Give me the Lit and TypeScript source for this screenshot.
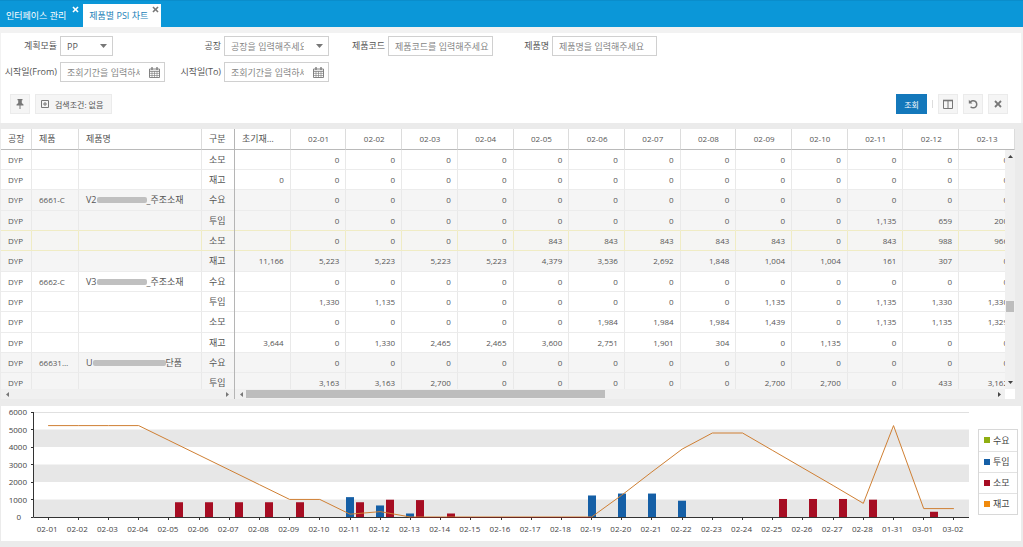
import { LitElement, html, svg, css, nothing } from "lit";
import { customElement, property, state } from "lit/decorators.js";
import { classMap } from "lit/directives/class-map.js";

const DATES = ["02-01", "02-02", "02-03", "02-04", "02-05", "02-06", "02-07", "02-08", "02-09", "02-10", "02-11", "02-12", "02-13"];

interface Row {
  product?: string;
  name?: [string, string, string];
  kind: string;
  start: string;
  values: string[];
  shade?: boolean;
  selected?: boolean;
}

const zeros = (n: number): string[] => Array(n).fill("0");

const ROWS: Row[] = [
  { kind: "소모", start: "", values: zeros(13) },
  { kind: "재고", start: "0", values: zeros(13) },
  { product: "6661-C", name: ["V2", "mid", "_주조소재"], kind: "수요", start: "", values: zeros(13), shade: true },
  { kind: "투입", start: "", values: [...zeros(10), "1,135", "659", "200"], shade: true },
  { kind: "소모", start: "", values: [...zeros(4), "843", "843", "843", "843", "843", "0", "843", "988", "966"], shade: true, selected: true },
  { kind: "재고", start: "11,166", values: ["5,223", "5,223", "5,223", "5,223", "4,379", "3,536", "2,692", "1,848", "1,004", "1,004", "161", "307", "0"], shade: true },
  { product: "6662-C", name: ["V3", "mid", "_주조소재"], kind: "수요", start: "", values: zeros(13) },
  { kind: "투입", start: "", values: ["1,330", "1,135", "0", "0", "0", "0", "0", "0", "1,135", "0", "1,135", "1,330", "1,330"] },
  { kind: "소모", start: "", values: ["0", "0", "0", "0", "0", "1,984", "1,984", "1,984", "1,439", "0", "1,135", "1,135", "1,329"] },
  { kind: "재고", start: "3,644", values: ["0", "1,330", "2,465", "2,465", "3,600", "2,751", "1,901", "304", "0", "1,135", "0", "0", "0"] },
  { product: "666310-C", name: ["U", "long", "단품"], kind: "수요", start: "", values: zeros(13), shade: true },
  { kind: "투입", start: "", values: ["3,163", "3,163", "2,700", "0", "0", "0", "0", "0", "2,700", "2,700", "0", "433", "3,162"], shade: true },
];

const CROSS = svg`<path d="M2.2 0.6 L5 3.4 L7.8 0.6 L9.4 2.2 L6.6 5 L9.4 7.8 L7.8 9.4 L5 6.6 L2.2 9.4 L0.6 7.8 L3.4 5 L0.6 2.2 Z" fill="currentColor"/>`;

@customElement("psi-tabs")
class PsiTabs extends LitElement {
  @state() private active = 1;
  static styles = css`
    :host { display: block; background: #0b97d8; border-top: 1px solid #0a8dcb; }
    .bar { display: flex; align-items: flex-end; height: 26px; }
    .tab { position: relative; height: 23px; color: #fff; display: flex; }
    .tab.on { background: #fff; color: #1c7fb8; }
    .name { all: unset; font-size: 9px; line-height: 22px; padding: 0 17px 0 6px; cursor: pointer; white-space: nowrap; }
    .on .name { padding-right: 13px; }
    .close { all: unset; position: absolute; top: 2px; right: 2px; width: 7px; height: 7px; display: flex; cursor: pointer; }
    .tab:not(.on) .close { right: 4px; }
    .on .close { color: #777; }
    svg { width: 7px; height: 7px; }
  `;
  render() {
    return html`<nav class="bar">
      ${["인터페이스 관리", "제품별 PSI 차트"].map((t, i) => html`
        <div class=${classMap({ tab: true, on: i === this.active })}>
          <button class="name" @click=${() => (this.active = i)}>${t}</button>
          <button class="close" aria-label="닫기"><svg viewBox="0 0 10 10">${CROSS}</svg></button>
        </div>`)}
    </nav>`;
  }
}

@customElement("psi-filter")
class PsiFilter extends LitElement {
  static styles = css`
    :host { display: block; background: #fff; margin: 0 2px 0 1px; color: #555; }
    form { display: flex; flex-direction: column; padding: 3px 13px 9px 0; }
    .fields { display: grid; grid-template-columns: repeat(4, 164px); row-gap: 6px; }
    .field { display: flex; align-items: center; }
    .second { grid-column: 2; }
    label { flex: 0 0 59px; box-sizing: border-box; padding-right: 3px; text-align: right; font-size: 9px; line-height: 20px; white-space: nowrap; }
    .box { position: relative; width: 105px; display: flex; }
    .box.short { width: 53px; }
    input, select { box-sizing: border-box; width: 100%; height: 20px; border: 1px solid #d0d0d0; border-radius: 0; background: #fff; padding: 0 3px 0 6px; font: inherit; font-size: 9px; color: #555; appearance: none; outline: 0; }
    select.empty { color: #858585; }
    select { padding-right: 24px; }
    ::placeholder { color: #858585; opacity: 1; }
    .date input { border-right: 0; padding-right: 0; }
    .date { border-right: 1px solid #d0d0d0; box-sizing: border-box; }
    .cal { all: unset; box-sizing: border-box; flex: 0 0 24px; height: 20px; padding-right: 4px; border: solid #d0d0d0; border-width: 1px 0; display: flex; align-items: center; justify-content: flex-end; color: #777; }
    .cal svg { width: 11px; height: 11px; }
    .arrow { position: absolute; right: 6px; top: 8px; width: 7px; height: 4px; pointer-events: none; }
    .tools { display: flex; align-items: center; gap: 5px; padding: 12px 0 0 9px; }
    .btn { box-sizing: border-box; height: 20px; min-width: 20px; border: 1px solid #ebebeb; background: #f5f5f5; padding: 0; margin: 0; font: inherit; font-size: 9px; color: #555; display: flex; align-items: center; justify-content: center; gap: 5px; }
    .btn svg { width: 10px; height: 10px; color: #777; }
    .cond { padding: 0 8px 0 4px; font-size: 8px; }
    .go { background: #1478bb; border-color: #1478bb; color: #fff; width: 31px; margin-left: auto; font-size: 8px; }
    .sep { width: 1px; height: 8px; background: #ddd; }
  `;
  private arrow() {
    return html`<svg class="arrow" viewBox="0 0 7 4"><path d="M0 0H7L3.5 4Z" fill="#777"/></svg>`;
  }
  private date(id: string) {
    return html`<div class="box date"><input id=${id} type="text" placeholder="조회기간을 입력하세요">
      <button type="button" class="cal" aria-label="달력"><svg viewBox="0 0 11 11" fill="none" stroke="currentColor"><path d="M.5 2H10.5V10.5H.5Z M.5 4.3H10.5" stroke-width=".9"/><path d="M.5 6.4H10.5 M.5 8.5H10.5 M3 4.3V10.5 M5.5 4.3V10.5 M8 4.3V10.5" stroke-width=".6"/><path d="M3 0V3 M8 0V3" stroke-width="1.3"/></svg></button></div>`;
  }
  render() {
    return html`<form @submit=${(e: Event) => e.preventDefault()}>
      <div class="fields">
        <div class="field"><label for="module">계획모듈</label><div class="box short"><select id="module"><option>PP</option></select>${this.arrow()}</div></div>
        <div class="field"><label for="plant">공장</label><div class="box"><select id="plant" class="empty"><option>공장을 입력해주세요</option></select>${this.arrow()}</div></div>
        <div class="field"><label for="code">제품코드</label><div class="box"><input id="code" type="text" placeholder="제품코드를 입력해주세요"></div></div>
        <div class="field"><label for="pname">제품명</label><div class="box"><input id="pname" type="text" placeholder="제품명을 입력해주세요"></div></div>
        <div class="field"><label for="from">시작일(From)</label>${this.date("from")}</div>
        <div class="field second"><label for="to">시작일(To)</label>${this.date("to")}</div>
      </div>
      <div class="tools">
        <button type="button" class="btn" aria-label="고정"><svg viewBox="0 0 10 10"><path d="M2.5 0H7.5V1.2H6.8V4L8.5 5.6V6.6H5.5V10H4.5V6.6H1.5V5.6L3.2 4V1.2H2.5Z" fill="currentColor"/></svg></button>
        <button type="button" class="btn cond"><svg viewBox="0 0 10 10" fill="none" stroke="currentColor"><path d="M1.5 1.5H8.5V8.5H1.5Z M3 5H7 M5 3V7"/></svg>검색조건: 없음</button>
        <button type="submit" class="btn go">조회</button>
        <span class="sep"></span>
        <button type="button" class="btn" aria-label="열 설정"><svg viewBox="0 0 10 10" fill="none" stroke="currentColor"><path d="M.5 1.5H9.5V9.5H.5Z M5 1.5V9.5"/><path d="M0 1.5H10" stroke-width="1.6"/></svg></button>
        <button type="button" class="btn" aria-label="초기화"><svg viewBox="0 0 10 10"><path d="M2.2 3.2A3.6 3.6 0 1 1 2.6 7.8" fill="none" stroke="currentColor" stroke-width="1.5"/><path d="M.8 .8V4.4H4.4Z" fill="currentColor"/></svg></button>
        <button type="button" class="btn" aria-label="지우기"><svg viewBox="-1 -1 12 12">${CROSS}</svg></button>
      </div>
    </form>`;
  }
}

@customElement("psi-grid")
class PsiGrid extends LitElement {
  static styles = css`
    :host { display: block; margin: 0 8px 0 1px; color: #555; }
    .panes { display: grid; grid-template-columns: 234px minmax(0, 1fr); background: #f0f0f0; }
    .pane { position: relative; min-width: 0; }
    .frozen { border-right: 1px solid #b5b5b5; }
    .view { height: 260px; overflow: hidden; background: #fff; }
    table { border-collapse: separate; border-spacing: 0; table-layout: fixed; width: 100%; font-size: 8px; }
    .scroll table { min-width: 779px; }
    th, td { box-sizing: border-box; height: 20px; padding: 0 6px 0 7px; line-height: 19px; font-weight: 400; text-align: left; border-right: 1px solid #e9e9e9; border-bottom: 1px solid #ececec; overflow: hidden; white-space: nowrap; text-overflow: ellipsis; }
    th { height: 21px; line-height: 20px; border-bottom: 1px solid #bababa; border-right-color: #dcdcdc; }
    tbody tr:nth-child(3n) td { height: 21px; line-height: 20px; }
    .scroll th { text-align: center; }
    .scroll th.cut { text-align: left; padding-right: 12px; }
    .scroll td { text-align: right; }
    .frozen th:last-child, .frozen td:last-child { border-right: 0; }
    .ko, th.ko { font-size: 9px; }
    .shade td { background: #f5f5f5; }
    .before td, .selected td { border-bottom-color: #f0ecc4; }
    .selected td { background: #f5f5f3; border-right-color: #f0ecc4; }
    .plant { width: 31px; }
    .product { width: 47px; }
    .kind { width: 32px; }
    .mask { display: inline-block; height: 6px; background: #c0c0c0; border-radius: 2px; vertical-align: 0; }
    .mask.mid { width: 50px; }
    .mask.long { width: 73px; }
    .track { height: 10px; display: flex; align-items: center; justify-content: space-between; padding: 0 4px; background: #f0f0f0; }
    .track svg, .vbar svg { flex: none; width: 5px; height: 5px; }
    .scroll .track { padding-right: 13px; }
    .lane { flex: 1; margin: 0 4px 0 2px; }
    .thumb { width: 48%; height: 8px; background: #bdbdbd; }
    .vbar { position: absolute; top: 21px; right: 0; width: 10px; height: 239px; box-sizing: border-box; padding: 4px 0; background: #f0f0f0; display: flex; flex-direction: column; align-items: center; }
    .vthumb { width: 8px; height: 11px; background: #bdbdbd; margin: 142px 0 auto; }
    .corner { position: absolute; right: 0; bottom: 0; width: 10px; height: 10px; background: #fff; }
  `;
  private tri(d: string, fill = "#444") {
    return html`<svg viewBox="0 0 5 5"><path d=${d} fill=${fill}/></svg>`;
  }
  private cls(r: Row, i: number) {
    return classMap({ shade: !!r.shade, selected: !!r.selected, before: !!ROWS[i + 1]?.selected });
  }
  render() {
    return html`<div class="panes">
      <div class="pane frozen">
        <div class="view"><table>
          <thead><tr><th class="ko plant">공장</th><th class="ko product">제품</th><th class="ko">제품명</th><th class="ko kind">구분</th></tr></thead>
          <tbody>${ROWS.map((r, i) => html`<tr class=${this.cls(r, i)}><td>DYP</td><td>${r.product ?? ""}</td><td class="ko">${r.name ? html`${r.name[0]}<span class="mask ${r.name[1]}"></span>${r.name[2]}` : nothing}</td><td class="ko">${r.kind}</td></tr>`)}</tbody>
        </table></div>
        <div class="track">${this.tri("M4 0V5L1 2.5Z", "#777")}${this.tri("M1 0V5L4 2.5Z", "#777")}</div>
      </div>
      <div class="pane scroll">
        <div class="view"><table>
          <thead><tr><th class="ko cut">초기재고수량</th>${DATES.map((d) => html`<th>${d}</th>`)}</tr></thead>
          <tbody>${ROWS.map((r, i) => html`<tr class=${this.cls(r, i)}><td>${r.start}</td>${r.values.map((v) => html`<td>${v}</td>`)}</tr>`)}</tbody>
        </table></div>
        <div class="vbar">${this.tri("M0 4H5L2.5 1Z")}<div class="vthumb"></div>${this.tri("M0 1H5L2.5 4Z")}</div>
        <div class="track">${this.tri("M4 0V5L1 2.5Z", "#777")}<div class="lane"><div class="thumb"></div></div>${this.tri("M1 0V5L4 2.5Z")}</div>
        <div class="corner"></div>
      </div>
    </div>`;
  }
}

const DAYS = [...Array.from({ length: 28 }, (_, i) => `02-${String(i + 1).padStart(2, "0")}`), "01-31", "03-01", "03-02"];
const INPUT: Record<string, number> = { "02-11": 1135, "02-12": 659, "02-13": 200, "02-19": 1230, "02-20": 1340, "02-21": 1340, "02-22": 930 };
const USED: Record<string, number> = { "02-05": 843, "02-06": 843, "02-07": 843, "02-08": 843, "02-09": 843, "02-11": 843, "02-12": 988, "02-13": 966, "02-14": 200, "02-25": 1030, "02-26": 1030, "02-27": 1030, "02-28": 990, "03-01": 300 };
const STOCK = [5223, 5223, 5223, 5223, 4379, 3536, 2692, 1848, 1004, 1004, 161, 307, 0, 0, 0, 0, 0, 0, 0, 1250, 2580, 3880, 4800, 4800, 3800, 2800, 1800, 780, 5223, 480, 480];

@customElement("psi-chart")
class PsiChart extends LitElement {
  @property({ type: Array }) series = [["수요", "#8fae12"], ["투입", "#155fa6"], ["소모", "#a60d23"], ["재고", "#f08a0c"]];
  static styles = css`
    :host { display: block; background: #fff; margin: 0 2px 0 1px; }
    .wrap { display: grid; grid-template-columns: minmax(0, 1fr) 40px; align-items: center; padding-right: 3px; }
    .plot { display: block; width: 100%; height: auto; }
    text { font-size: 8px; fill: #444; }
    ul { list-style: none; margin: 0 0 4px; padding: 0; border: 1px solid #d8d8d8; font-size: 9px; color: #444; }
    li { display: flex; align-items: center; gap: 3px; height: 21px; padding-left: 5px; box-sizing: border-box; border-top: 1px solid #e2e2e2; white-space: nowrap; }
    li:first-child { border-top: 0; }
    .key { width: 6px; height: 6px; flex: none; }
  `;
  render() {
    const left = 32, right = 968, base = 111, unit = 17.5;
    const step = (right - left) / DAYS.length;
    const x = (i: number) => left + step * (i + 0.5);
    const y = (v: number) => base - (v / 1000) * unit;
    const bar = (i: number, v: number | undefined, dx: number, fill: string) =>
      v ? svg`<rect x=${Math.round(x(i)) + dx} y=${y(v)} width="8" height=${base - y(v)} fill=${fill}/>` : nothing;
    return html`<div class="wrap">
      <svg class="plot" viewBox="0 0 977 135" role="img" aria-label="PSI">
        ${[4000, 2000, 0].map((v) => svg`<rect x=${left} y=${y(v + 1000)} width=${right - left} height=${unit} fill="#e7e7e7"/>`)}
        <path d="M${left} 6.5H${right}" stroke="#e0e0e0"/>
        ${DAYS.map((d, i) => svg`${bar(i, INPUT[d], -4, "#155fa6")}${bar(i, USED[d], 6, "#a60d23")}`)}
        <path d="M${left + 0.5} 6V${base + 0.5}H${right}" fill="none" stroke="#333"/>
        ${[0, 1, 2, 3, 4, 5, 6].map((k) => svg`<path d="M30 ${Math.floor(y(k * 1000)) + 0.5}H32" stroke="#333"/><text x=${k ? 26 : 20} y=${Math.round(y(k * 1000)) + 3} text-anchor="end">${k * 1000}</text>`)}
        <polyline points=${STOCK.map((v, i) => `${x(i)},${y(v)}`).join(" ")} fill="none" stroke="#cf7f33"/>
        <path d="M${x(12)} ${base + 0.5}H${x(18)}" stroke="#6b2a22"/>
        ${DAYS.map((d, i) => svg`<path d="M${Math.floor(x(i)) + 0.5} 112V114" stroke="#333"/><text x=${x(i) - 1} y="126" text-anchor="middle">${d}</text>`)}
      </svg>
      <ul>${this.series.map(([n, c]) => html`<li><svg class="key" viewBox="0 0 6 6"><rect width="6" height="6" fill=${c}/></svg>${n}</li>`)}</ul>
    </div>`;
  }
}

@customElement("app-root")
class AppRoot extends LitElement {
  static styles = css`
    :host { display: block; min-height: 100vh; background: #ebebeb; font-family: "Open Sans", "Noto Sans CJK KR", sans-serif; }
    .top { background: #f2f2f2; padding-top: 6px; margin-bottom: 6px; }
    main { display: flex; flex-direction: column; }
    psi-grid { margin-bottom: 7px; }
  `;
  render() {
    return html`<psi-tabs></psi-tabs>
      <main>
        <div class="top"><psi-filter></psi-filter></div>
        <psi-grid></psi-grid>
        <psi-chart></psi-chart>
      </main>`;
  }
}
